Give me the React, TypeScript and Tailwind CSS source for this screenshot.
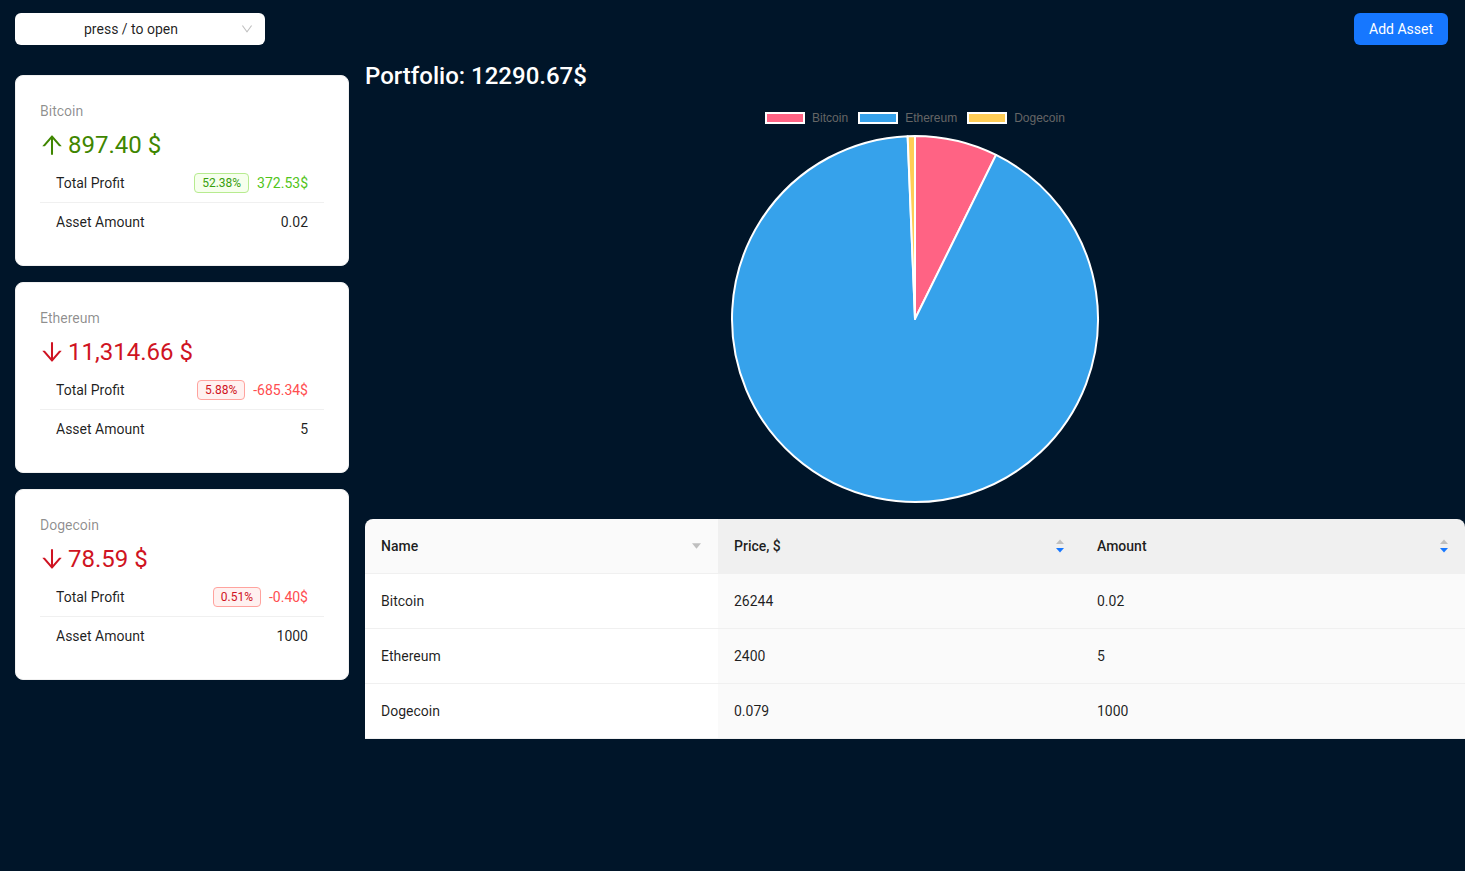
import React from 'react';

const assets = [
  { name: 'Bitcoin', total: '897.40', up: true, percent: '52.38%', profit: '372.53$', amount: '0.02', price: '26244' },
  { name: 'Ethereum', total: '11,314.66', up: false, percent: '5.88%', profit: '-685.34$', amount: '5', price: '2400' },
  { name: 'Dogecoin', total: '78.59', up: false, percent: '0.51%', profit: '-0.40$', amount: '1000', price: '0.079' },
];

const slices = [
  { name: 'Bitcoin', value: 897.4, color: '#ff6384' },
  { name: 'Ethereum', value: 11314.66, color: '#36a2eb' },
  { name: 'Dogecoin', value: 78.59, color: '#ffcd56' },
];

function ArrowUp({ className }: { className?: string }) {
  return (
    <svg viewBox="64 64 896 896" className={className} fill="currentColor">
      <path d="M868 545.5L536.1 163a31.96 31.96 0 00-48.3 0L156 545.5a7.97 7.97 0 006 13.2h81c4.6 0 9-2 12.1-5.5L474 300.9V864c0 4.4 3.6 8 8 8h60c4.4 0 8-3.6 8-8V300.9l218.9 252.3c3 3.5 7.4 5.5 12.1 5.5h81c6.8 0 10.5-8 6-13.2z" />
    </svg>
  );
}

function ArrowDown({ className }: { className?: string }) {
  return (
    <svg viewBox="64 64 896 896" className={className} fill="currentColor">
      <path d="M862 465.3h-81c-4.6 0-9 2-12.1 5.5L550 723.1V160c0-4.4-3.6-8-8-8h-60c-4.4 0-8 3.6-8 8v563.1L255.1 470.8c-3-3.5-7.4-5.5-12.1-5.5h-81c-6.8 0-10.5 8.1-6 13.2L487.9 861a31.96 31.96 0 0048.3 0L868 478.5c4.4-5.2.7-13.2-6-13.2z" />
    </svg>
  );
}

function SortIcon() {
  return (
    <svg viewBox="0 0 10 16" className="w-[10px] h-[16px]">
      <path d="M5 1.5 L9 6 H1 Z" fill="#bfbfbf" />
      <path d="M5 14.5 L9 10 H1 Z" fill="#1677ff" />
    </svg>
  );
}

function AssetCard({ a }: { a: (typeof assets)[number] }) {
  const valueColor = a.up ? 'text-[#3f8600]' : 'text-[#cf1322]';
  return (
    <div className="bg-white rounded-lg border border-[#f0f0f0] p-6">
      <div className="text-[14px] leading-[22px] text-black/45">{a.name}</div>
      <div className={`mt-1 h-[38px] flex items-center text-[24px] ${valueColor}`}>
        {a.up ? <ArrowUp className="w-[24px] h-[24px] mr-[4px]" /> : <ArrowDown className="w-[24px] h-[24px] mr-[4px]" />}
        <span>{a.total} $</span>
      </div>
      <div className="flex items-center justify-between h-[39px] px-4 border-b border-[#f0f0f0] text-[14px] text-black/[0.88]">
        <span>Total Profit</span>
        <div className="flex items-center">
          <span
            className={`h-[20px] leading-[18px] px-[7px] mr-2 text-[12px] rounded border ${
              a.up ? 'bg-[#f6ffed] border-[#b7eb8f] text-[#389e0d]' : 'bg-[#fff1f0] border-[#ffa39e] text-[#cf1322]'
            }`}
          >
            {a.percent}
          </span>
          <span className={a.up ? 'text-[#52c41a]' : 'text-[#ff4d4f]'}>{a.profit}</span>
        </div>
      </div>
      <div className="flex items-center justify-between h-[38px] px-4 text-[14px] text-black/[0.88]">
        <span>Asset Amount</span>
        <span>{a.amount}</span>
      </div>
    </div>
  );
}

function Pie() {
  const total = slices.reduce((s, x) => s + x.value, 0);
  const cx = 185;
  const cy = 185;
  const r = 183;
  let angle = -Math.PI / 2;
  const paths = slices.map((s) => {
    const sweep = (s.value / total) * Math.PI * 2;
    const start = angle;
    const end = angle + sweep;
    angle = end;
    const x1 = cx + r * Math.cos(start);
    const y1 = cy + r * Math.sin(start);
    const x2 = cx + r * Math.cos(end);
    const y2 = cy + r * Math.sin(end);
    const large = sweep > Math.PI ? 1 : 0;
    return { d: `M${cx} ${cy} L${x1} ${y1} A${r} ${r} 0 ${large} 1 ${x2} ${y2} Z`, color: s.color };
  });
  return (
    <svg width="370" height="370" viewBox="0 0 370 370">
      {paths.map((p, i) => (
        <path key={i} d={p.d} fill={p.color} stroke="#fff" strokeWidth="2" strokeLinejoin="round" />
      ))}
    </svg>
  );
}

export default function App() {
  return (
    <div className="min-h-screen bg-[#001529]" style={{ fontFamily: 'Roboto, "Noto Sans", sans-serif' }}>
      <div className="flex items-start justify-between pl-[15px] pr-[17px] pt-[13px] h-[60px]">
        <div className="relative w-[250px] h-[32px] bg-white rounded-md flex items-center pl-[11px] pr-[29px]">
          <span className="flex-1 text-center text-[14px] text-black/[0.88]">press / to open</span>
          <svg viewBox="64 64 896 896" className="absolute right-[12px] top-[10px] w-[12px] h-[12px]" fill="#bfbfbf">
            <path d="M884 256h-75c-5.1 0-9.9 2.5-12.9 6.6L512 654.2 227.9 262.6c-3-4.1-7.8-6.6-12.9-6.6h-75c-6.5 0-10.3 7.4-6.5 12.7l352.6 486.1c12.8 17.6 39 17.6 51.7 0l352.6-486.1c3.9-5.3.1-12.7-6.4-12.7z" />
          </svg>
        </div>
        <button className="h-[32px] px-[15px] bg-[#1677ff] text-white text-[14px] rounded-md">Add Asset</button>
      </div>

      <div className="flex gap-4 pl-[15px]">
        <div className="w-[334px] shrink-0 flex flex-col gap-4 pt-[15px]">
          {assets.map((a) => (
            <AssetCard key={a.name} a={a} />
          ))}
        </div>

        <div className="flex-1 min-w-0">
          <h3 className="text-white text-[24px] leading-[32px] font-medium">Portfolio: 12290.67$</h3>
          <div className="flex flex-col items-center">
            <div className="mt-[20px] flex items-center gap-[10px] text-[12px] text-[#666]" style={{ fontFamily: '"Liberation Sans", Arial, sans-serif' }}>
              {slices.map((s) => (
                <div key={s.name} className="flex items-center gap-[7px]">
                  <span className="w-[40px] h-[12px] border-2 border-white" style={{ background: s.color }} />
                  <span className="leading-[12px]">{s.name}</span>
                </div>
              ))}
            </div>
            <div className="mt-[10px]">
              <Pie />
            </div>
          </div>

          <div className="mt-[15px] rounded-t-lg overflow-hidden text-[14px] text-black/[0.88]">
            <div className="grid grid-cols-[353px_363px_1fr]">
              <div className="h-[55px] bg-[#fafafa] border-b border-[#f0f0f0] flex items-center justify-between px-4 font-medium">
                <span>Name</span>
                <svg viewBox="0 0 10 6" className="w-[9px] h-[6px] mr-[1px]">
                  <path d="M0 0 H10 L5 6 Z" fill="#bfbfbf" />
                </svg>
              </div>
              <div className="h-[55px] bg-[#f0f0f0] border-b border-[#f0f0f0] flex items-center justify-between px-4 font-medium">
                <span>Price, $</span>
                <SortIcon />
              </div>
              <div className="h-[55px] bg-[#f0f0f0] border-b border-[#f0f0f0] flex items-center justify-between px-4 font-medium">
                <span>Amount</span>
                <SortIcon />
              </div>
              {assets.map((a) => (
                <React.Fragment key={a.name}>
                  <div className="h-[55px] bg-white border-b border-[#f0f0f0] flex items-center px-4">{a.name}</div>
                  <div className="h-[55px] bg-[#fafafa] border-b border-[#f0f0f0] flex items-center px-4">{a.price}</div>
                  <div className="h-[55px] bg-[#fafafa] border-b border-[#f0f0f0] flex items-center px-4">{a.amount}</div>
                </React.Fragment>
              ))}
            </div>
          </div>
        </div>
      </div>
    </div>
  );
}
